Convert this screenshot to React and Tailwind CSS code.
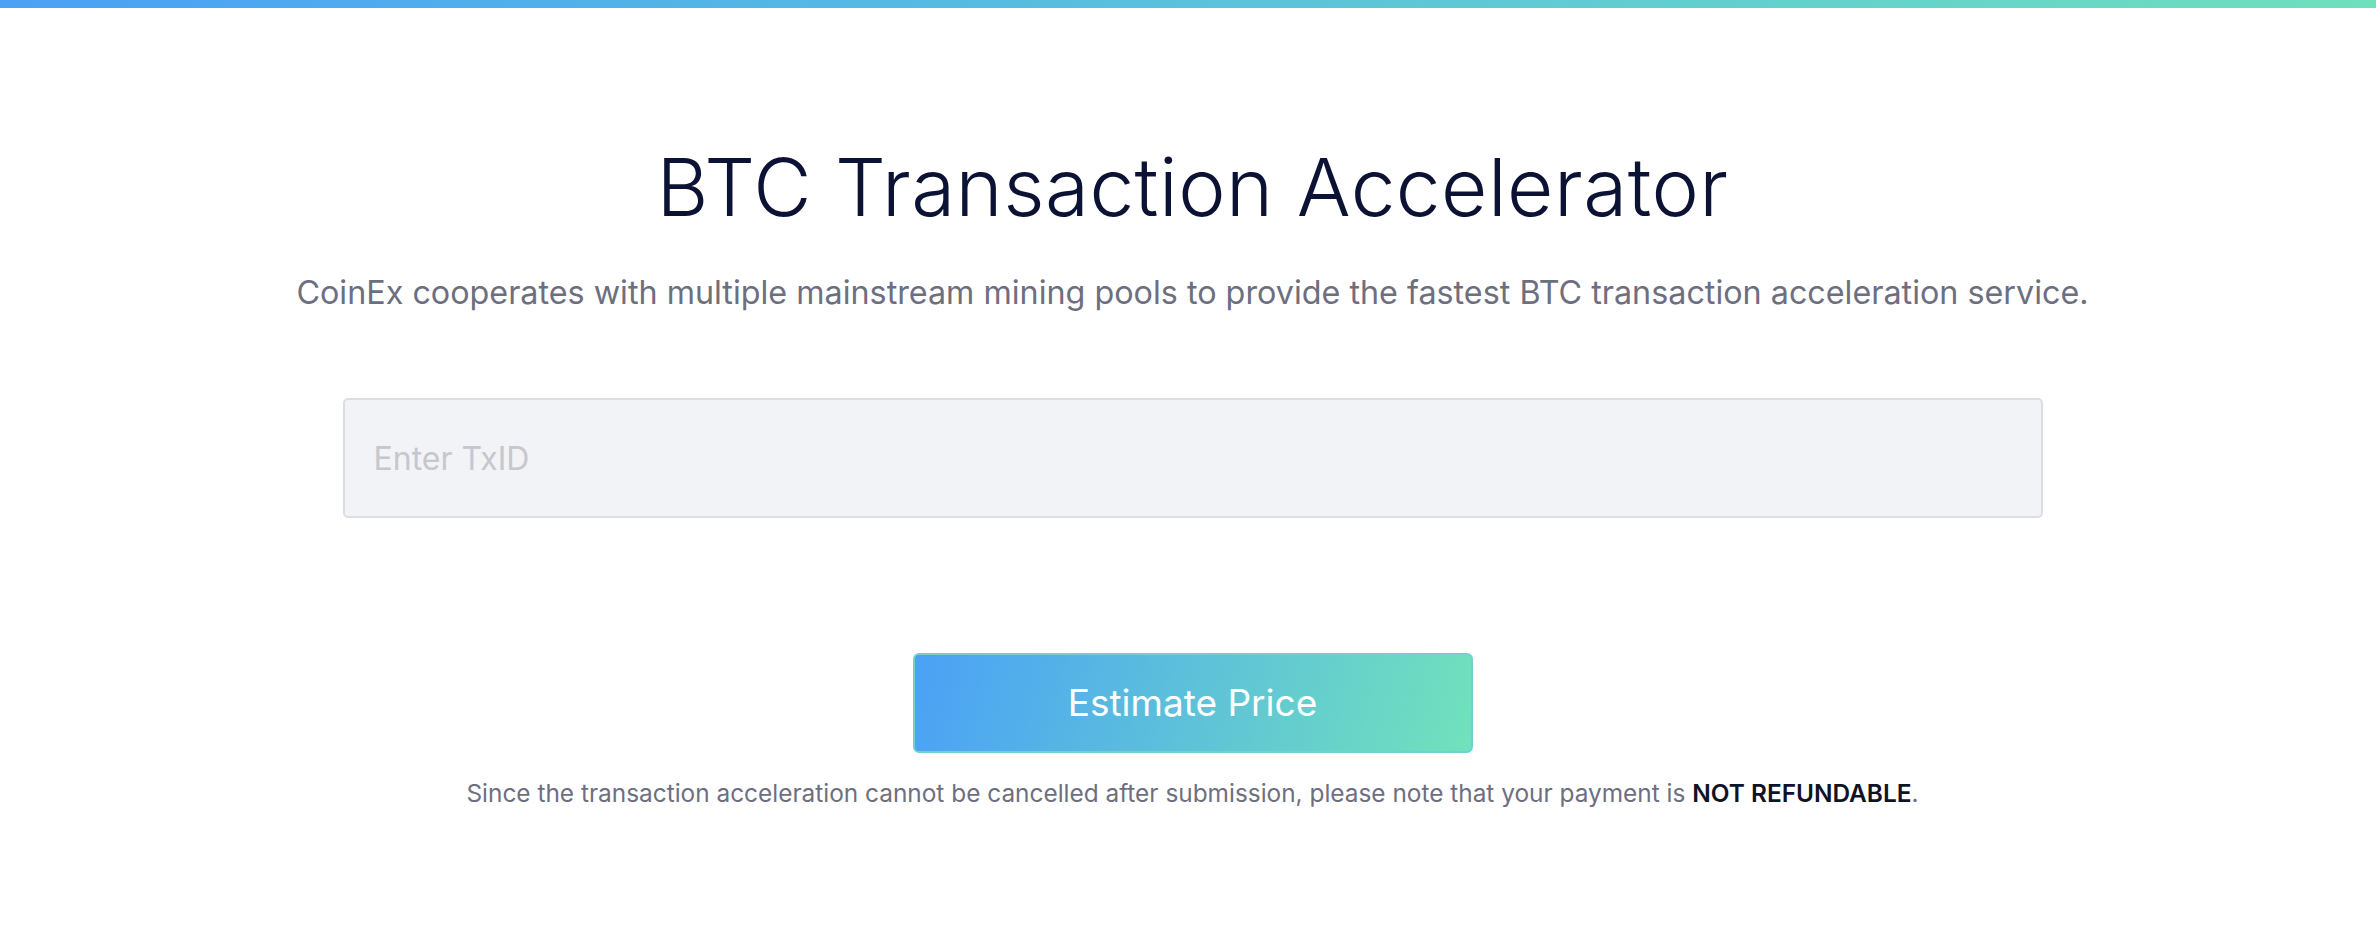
export default function App() {
  return (
    <div className="min-h-screen bg-white text-[#0b1234]" style={{ fontFamily: "Inter, 'Noto Sans', sans-serif" }}>
      {/* gradient strip */}
      <div className="h-2 bg-linear-to-r from-[#4ca0f5] to-[#6ee0bc]" />

      <main className="flex flex-col items-center pl-[9px]">
        <h1 className="mt-[131px] text-[80px] leading-[96px] font-light tracking-[0.5px]">BTC Transaction Accelerator</h1>
        <p className="mt-[38px] text-[32.3px] leading-[40px] text-[#6d6f80]">
          CoinEx cooperates with multiple mainstream mining pools to provide the fastest BTC transaction acceleration service.
        </p>

        <input
          type="text"
          placeholder="Enter TxID"
          className="mt-[85px] w-[1700px] h-[120px] rounded-[5px] border-2 border-[#dcdee4] bg-[#f2f3f7] px-[29px] text-[32px] text-[#0b1234] placeholder:text-[#c6c7cd] outline-none"
        />

        <button className="mt-[135px] w-[560px] h-[100px] rounded-[6px] border-2 border-[#74cfd0] bg-linear-[105deg] from-[#4ba1f6] to-[#70e2bb] text-[37px] text-white">
          Estimate Price
        </button>

        <p className="mt-[25px] text-[24.4px] leading-[30px] text-[#6d6f80]">
          Since the transaction acceleration cannot be cancelled after submission, please note that your payment is{" "}
          <span className="font-semibold text-[#0f1324]">NOT REFUNDABLE</span>.
        </p>
      </main>
    </div>
  );
}
